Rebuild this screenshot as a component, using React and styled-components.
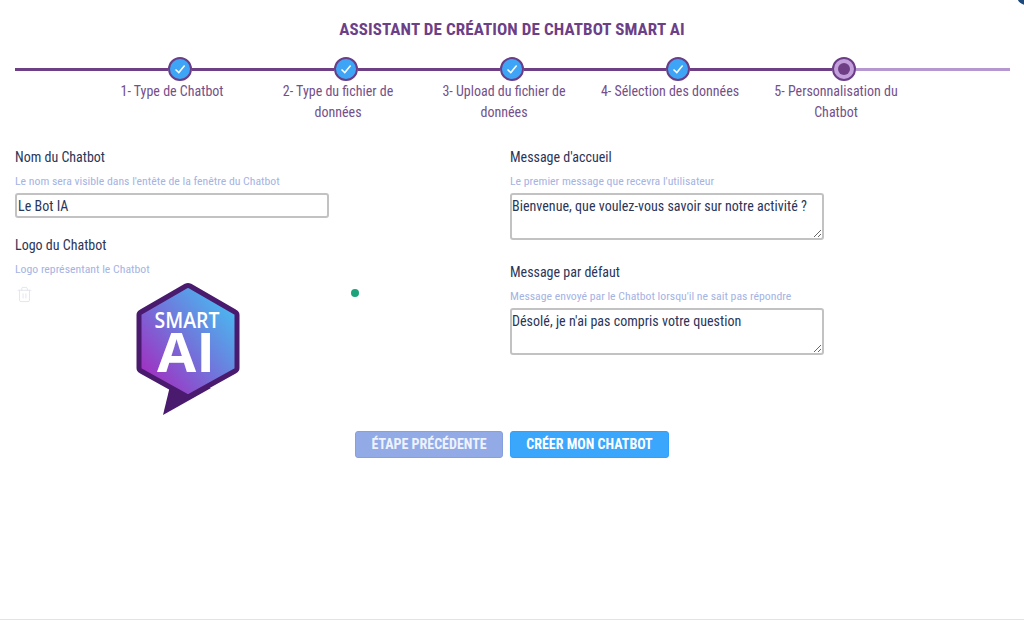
import React from "react";
import styled, { createGlobalStyle } from "styled-components";
import { Trash2 } from "lucide-react";

const GlobalStyle = createGlobalStyle`
  html, body {
    margin: 0;
    padding: 0;
    background: #fff;
  }
  * {
    box-sizing: border-box;
  }
`;

const Page = styled.div`
  position: relative;
  width: 1024px;
  height: 620px;
  overflow: hidden;
  padding-top: 19px;
  border-bottom: 1px solid #e3e3e3;
  font-family: Roboto, "Liberation Sans", sans-serif;
  font-stretch: 75%;
  color: #2b3557;
`;

const CornerMark = styled.div`
  position: absolute;
  top: -13px;
  right: -11px;
  width: 18px;
  height: 18px;
  border-radius: 50%;
  background: #1d4a78;
`;

const Title = styled.h1`
  margin: 0;
  text-align: center;
  font-size: 17px;
  line-height: 20px;
  font-weight: 700;
  letter-spacing: 0.1px;
  color: #6c3f87;
`;

const Track = styled.div`
  display: flex;
  align-items: center;
  margin: 18px 14px 0 15px;
  height: 24px;
`;

const Segment = styled.div`
  height: 3px;
  flex: ${(p) => p.$grow ?? 1} 0 0;
  background: ${(p) => (p.$todo ? "#b797d0" : "#6f3f85")};
`;

const Dot = styled.div`
  flex: none;
  display: flex;
  align-items: center;
  justify-content: center;
  width: 24px;
  height: 24px;
  border-radius: 50%;
  border: 2px solid #6a3d86;
  background: ${(p) => (p.$current ? "#c39fdc" : "#3ea5f6")};
`;

const DotCore = styled.div`
  width: 12px;
  height: 12px;
  border-radius: 50%;
  background: #6f3f85;
`;

const StepLabels = styled.div`
  display: flex;
  justify-content: center;
  padding-right: 16px;
`;

const StepLabel = styled.div`
  width: 166px;
  padding: 0 7px;
  text-align: center;
  font-size: 14px;
  line-height: 21px;
  height: 43px;
  color: #74508a;
`;

const Form = styled.div`
  display: grid;
  grid-template-columns: 495px 1fr;
  padding-left: 15px;
  margin-top: 23px;
`;

const Column = styled.div`
  display: flex;
  flex-direction: column;
`;

const Field = styled.div`
  display: flex;
  flex-direction: column;
  margin-bottom: ${(p) => p.$gap ?? 0}px;
`;

const Label = styled.label`
  font-size: 14px;
  line-height: 20px;
  color: #2b3557;
`;

const Hint = styled.div`
  font-size: 11.75px;
  line-height: 14px;
  margin-top: 7px;
  margin-bottom: 5px;
  color: #a5b3e3;
`;

const TextInput = styled.input`
  width: 314px;
  height: 25px;
  padding: 0 1px;
  border: 2px solid #c2c2c2;
  border-radius: 3px;
  outline: none;
  font: inherit;
  font-size: 14px;
  letter-spacing: 0.03px;
  color: #2b3557;
`;

const TextArea = styled.textarea`
  display: block;
  width: 314px;
  height: 47px;
  padding: 1px 0;
  border: 2px solid #c2c2c2;
  border-radius: 3px;
  outline: none;
  font: inherit;
  font-size: 14px;
  letter-spacing: 0.03px;
  line-height: 20px;
  color: #2b3557;
`;

const LogoRow = styled.div`
  display: flex;
  align-items: flex-start;
  margin-top: 1px;
`;

const TrashSlot = styled.div`
  width: 120px;
  padding-top: 4px;
  padding-left: 1px;
  color: #dfe3ea;
`;

const StatusDot = styled.div`
  width: 8px;
  height: 8px;
  margin-left: 110px;
  margin-top: 7px;
  border-radius: 50%;
  background: #1ba37b;
`;

const Actions = styled.div`
  display: flex;
  justify-content: center;
  gap: 7px;
  margin-top: 14px;
`;

const Button = styled.button`
  height: 27px;
  width: ${(p) => p.$width}px;
  padding: 0 0 1px;
  border: 1px solid ${(p) => (p.$muted ? "#86a0de" : "#30a0fa")};
  border-radius: 3px;
  background: ${(p) => (p.$muted ? "#92abe6" : "#3aa7fc")};
  color: ${(p) => (p.$muted ? "#eef2fc" : "#fff")};
  font: inherit;
  font-size: 14px;
  font-weight: 700;
  text-transform: uppercase;
`;

const Check = () => (
  <svg width="14" height="14" viewBox="0 0 14 14" fill="none">
    <path d="M2.5 7.5 L5.8 10.6 L11.6 3.6" stroke="#fff" strokeWidth="1.5" />
  </svg>
);

const LogoText = styled.text`
  font-family: "Open Sans", sans-serif;
  font-stretch: normal;
  fill: #fff;
  text-anchor: middle;
`;

const SmartAiLogo = () => (
  <svg width="106" height="135" viewBox="0 0 106 135">
    <defs>
      <linearGradient id="logoFill" x1="0.95" y1="0.1" x2="0.1" y2="0.9">
        <stop offset="0" stopColor="#45c0f2" />
        <stop offset="0.5" stopColor="#6f78dc" />
        <stop offset="1" stopColor="#a32cc0" />
      </linearGradient>
    </defs>
    <path d="M36 100 L28 133 L76 106 Z" fill="#4a1a6e" />
    <path
      d="M51 4 Q53 3 55 4 L100 30 Q102 31 102 33 L102 86 Q102 88 100 89 L55 114 Q53 115 51 114 L6 89 Q4 88 4 86 L4 33 Q4 31 6 30 Z"
      fill="url(#logoFill)"
      stroke="#4a1a6e"
      strokeWidth="5"
      strokeLinejoin="round"
    />
    <LogoText x="52" y="46" fontSize="22" fontWeight="600" textLength="65" lengthAdjust="spacingAndGlyphs">
      SMART
    </LogoText>
    <LogoText x="51" y="90" fontSize="53" fontWeight="700" textLength="58" lengthAdjust="spacingAndGlyphs">
      AI
    </LogoText>
  </svg>
);

const steps = [
  "1- Type de Chatbot",
  "2- Type du fichier de données",
  "3- Upload du fichier de données",
  "4- Sélection des données",
  "5- Personnalisation du Chatbot",
];

export default function App() {
  return (
    <Page>
      <GlobalStyle />
      <CornerMark />
      <Title>ASSISTANT DE CRÉATION DE CHATBOT SMART AI</Title>

      <Track>
        <Segment $grow={153} />
        {steps.map((step, i) => (
          <React.Fragment key={step}>
            <Dot $current={i === 4}>{i === 4 ? <DotCore /> : <Check />}</Dot>
            {i < 4 && <Segment $grow={142} />}
          </React.Fragment>
        ))}
        <Segment $grow={154} $todo />
      </Track>

      <StepLabels>
        {steps.map((step) => (
          <StepLabel key={step}>{step}</StepLabel>
        ))}
      </StepLabels>

      <Form>
        <Column>
          <Field $gap={17}>
            <Label>Nom du Chatbot</Label>
            <Hint>Le nom sera visible dans l'entête de la fenêtre du Chatbot</Hint>
            <TextInput defaultValue="Le Bot IA" />
          </Field>
          <Field>
            <Label>Logo du Chatbot</Label>
            <Hint>Logo représentant le Chatbot</Hint>
            <LogoRow>
              <TrashSlot>
                <Trash2 size={17} strokeWidth={1.25} />
              </TrashSlot>
              <SmartAiLogo />
              <StatusDot />
            </LogoRow>
          </Field>
        </Column>
        <Column>
          <Field $gap={22}>
            <Label>Message d'accueil</Label>
            <Hint>Le premier message que recevra l'utilisateur</Hint>
            <TextArea defaultValue="Bienvenue, que voulez-vous savoir sur notre activité ?" />
          </Field>
          <Field>
            <Label>Message par défaut</Label>
            <Hint>Message envoyé par le Chatbot lorsqu'il ne sait pas répondre</Hint>
            <TextArea defaultValue="Désolé, je n'ai pas compris votre question" />
          </Field>
        </Column>
      </Form>

      <Actions>
        <Button $muted $width={148}>Étape précédente</Button>
        <Button $width={159}>Créer mon chatbot</Button>
      </Actions>
    </Page>
  );
}
